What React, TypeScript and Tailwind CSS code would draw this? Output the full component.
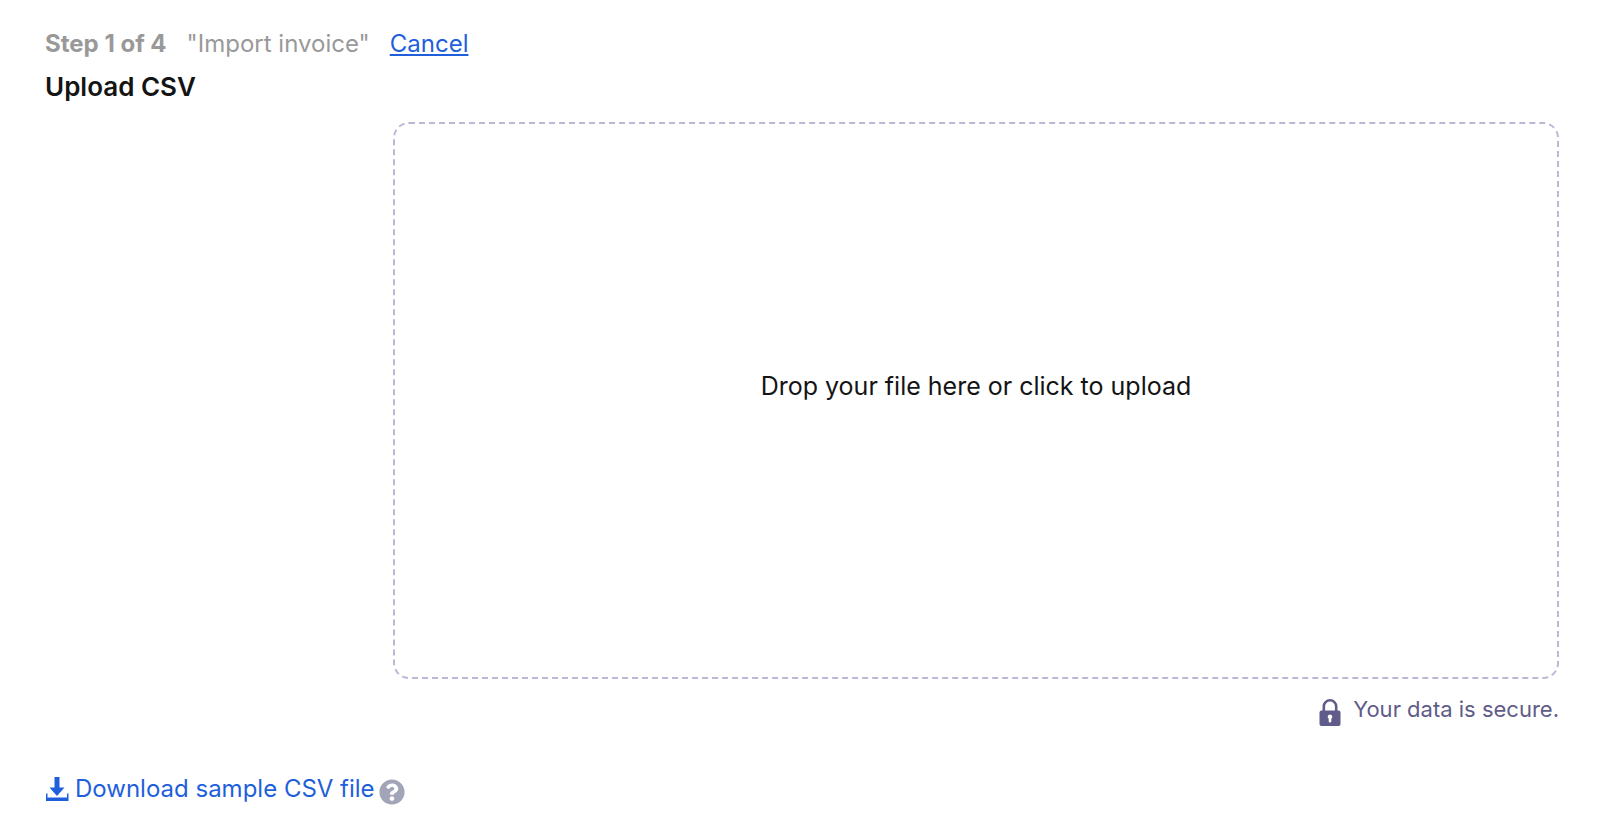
import { useState } from "react";

const DownloadIcon = () => (
  <svg className="w-6 h-6 shrink-0" viewBox="0 0 24 24" fill="currentColor" aria-hidden="true">
    <path d="M9.500 0h5v10.500h5L12 19 4.500 10.500h5z" />
    <path d="M1 16.500h1.500v4h19.500v-4h1.500V24H1z" />
  </svg>
);

const LockIcon = () => (
  <svg className="mt-1 w-[22px] h-7 shrink-0" viewBox="0 0 22 28" fill="none" aria-hidden="true">
    <path d="M4.800 13V7.500a6.200 6.200 0 0 1 12.400 0V13" stroke="currentColor" strokeWidth="2.600" />
    <rect x="0.500" y="11.500" width="21" height="15.500" rx="2" fill="currentColor" />
    <path d="M11 15.500a2.300 2.300 0 0 1 1.300 4.200v2.500a1.300 1.300 0 0 1-2.600 0v-2.500a2.300 2.300 0 0 1 1.300-4.200z" fill="#fff" />
  </svg>
);

const HelpIcon = () => (
  <svg className="w-[26px] h-[26px]" viewBox="0 0 512 512" fill="currentColor" aria-hidden="true">
    <path d="M504 256c0 136.997-111.043 248-248 248S8 392.997 8 256C8 119.083 119.043 8 256 8s248 111.083 248 248zM262.655 90c-54.497 0-89.255 22.957-116.549 63.758-3.536 5.286-2.353 12.415 2.715 16.258l34.699 26.310c5.205 3.947 12.621 3.008 16.665-2.122 17.864-22.658 30.113-35.797 57.303-35.797 20.429 0 45.698 13.148 45.698 32.958 0 14.976-12.363 22.667-32.534 33.976C247.128 238.528 216 254.941 216 296v4c0 6.627 5.373 12 12 12h56c6.627 0 12-5.373 12-12v-1.333c0-28.462 83.186-29.647 83.186-106.667 0-58.002-60.165-102-116.531-102zM256 338c-25.365 0-46 20.635-46 46 0 25.364 20.635 46 46 46s46-20.636 46-46c0-25.365-20.635-46-46-46z" />
  </svg>
);

// First step of the CSV import wizard
export default function App() {
  const [fileName, setFileName] = useState("");

  return (
    <main className="bg-white pl-[45px] pr-[41px] pt-7 pb-6 font-['Inter',sans-serif]">
      {/* Header */}
      <header>
        <div className="flex items-center gap-5 text-2xl text-[#999999]">
          <span className="font-bold">Step 1 of 4</span>
          <span>"Import invoice"</span>
          <a href="#cancel" className="text-[#1f5fdc] underline">
            Cancel
          </a>
        </div>
        <h1 className="mt-[11px] text-[26px] leading-8 font-semibold text-[#141414]">Upload CSV</h1>
      </header>

      {/* Upload area */}
      <section className="mt-[19px] ml-[348px]">
        <label
          htmlFor="csv-file"
          className="flex h-[557px] items-center justify-center rounded-2xl border-2 border-dashed border-[#bbb8d6] pb-7 text-[25px] text-[#141414] cursor-pointer"
        >
          {fileName || "Drop your file here or click to upload"}
        </label>
        <input
          id="csv-file"
          type="file"
          accept=".csv"
          className="sr-only"
          onChange={(e) => setFileName(e.target.files?.[0]?.name ?? "")}
        />
        <div className="mt-4 flex items-start justify-end gap-3 text-[22px] leading-7 text-[#5f5c89]">
          <LockIcon />
          <span>Your data is secure.</span>
        </div>
      </section>

      {/* Sample file */}
      <footer className="mt-[46px] flex items-end gap-1 text-2xl text-[#1f5fdc]">
        <a href="#sample" className="flex items-center gap-1.5">
          <DownloadIcon />
          Download sample CSV file
        </a>
        <button type="button" aria-label="Help" className="text-[#a1a5b7] cursor-pointer">
          <HelpIcon />
        </button>
      </footer>
    </main>
  );
}
